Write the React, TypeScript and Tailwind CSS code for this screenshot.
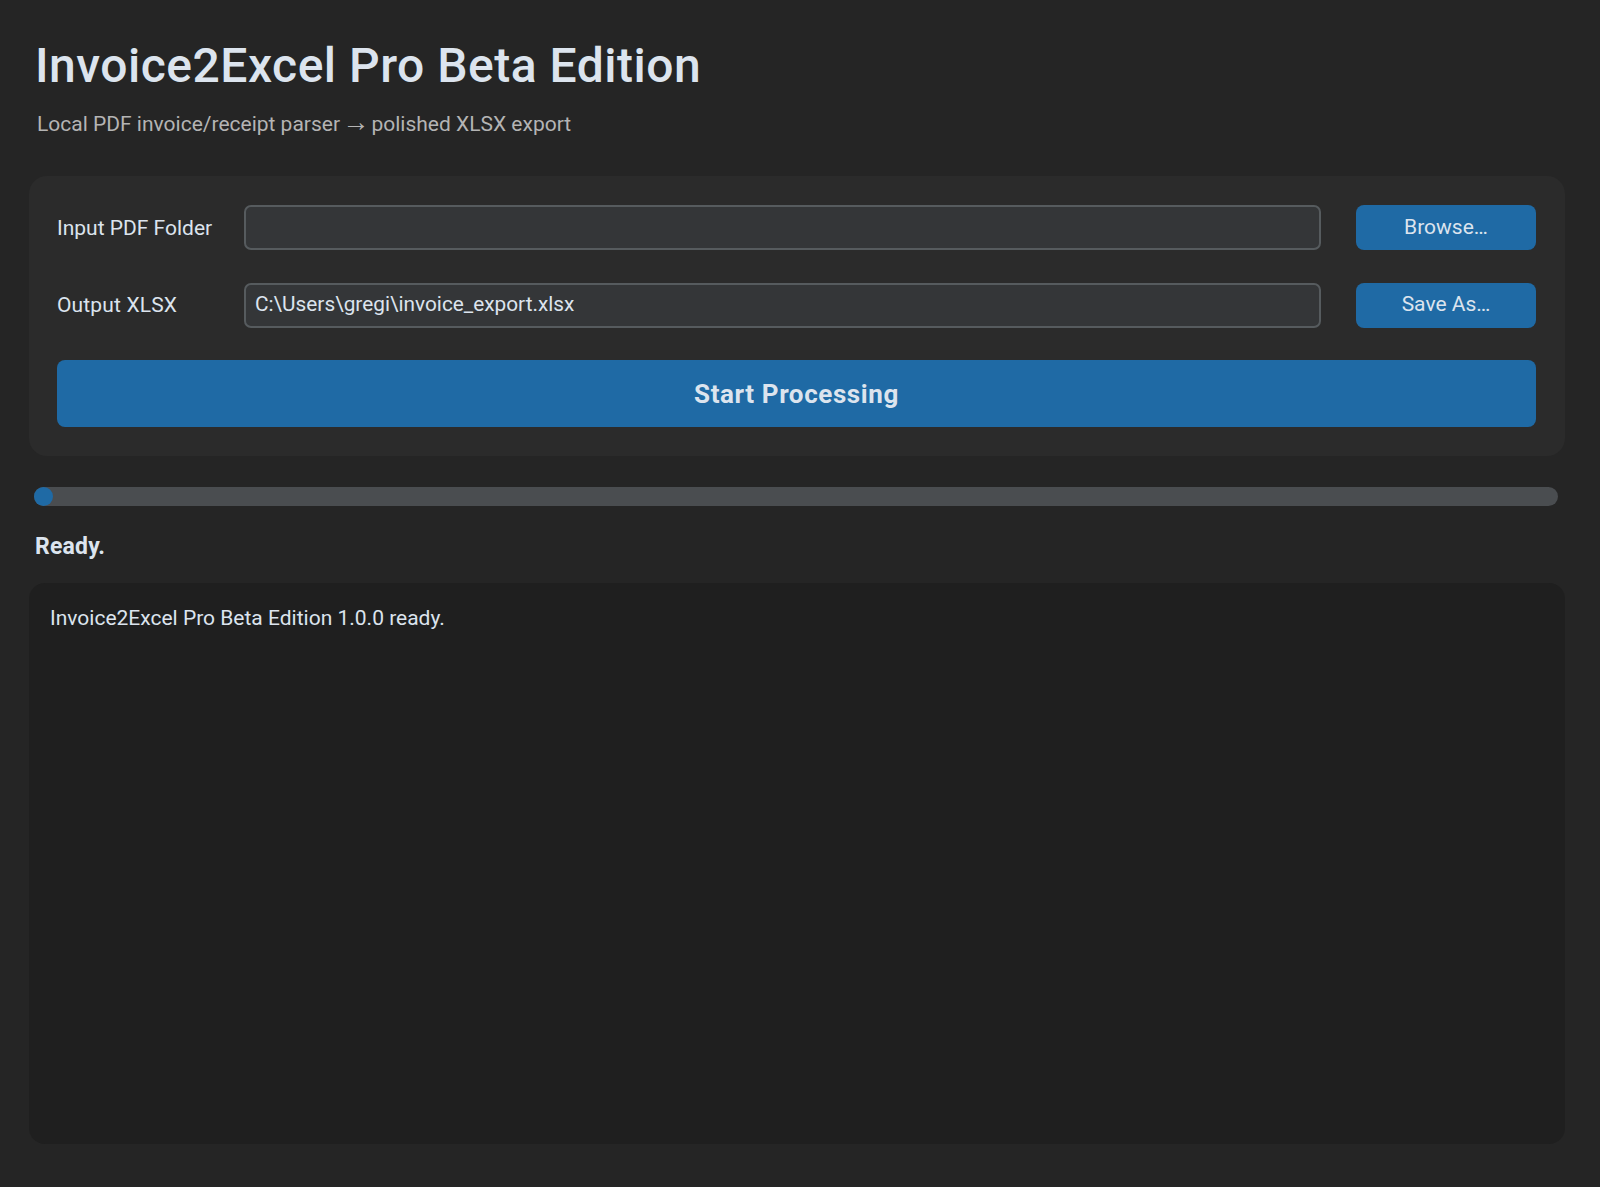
import React from 'react';

const App: React.FC = () => {
  return (
    <div className="min-h-screen bg-[#252525] pl-[29px] pr-[35px] pt-[35px] font-['Roboto',sans-serif] text-[#DCE4EE]">
      {/* Header */}
      <h1 className="pl-[6px] text-[48px] leading-[62px] font-medium tracking-[0.5px]">Invoice2Excel Pro Beta Edition</h1>
      <p className="mt-[12px] pl-[8px] text-[21px] leading-[30px] text-[#b4b4b4]">
        Local PDF invoice/receipt parser <span className="-mx-[3px] font-['Liberation_Sans',sans-serif] text-[27px] leading-none">→</span> polished XLSX export
      </p>

      {/* Form card */}
      <div className="mt-[37px] flex flex-col rounded-[18px] bg-[#2B2B2B] p-[29px] pl-[28px]">
        <div className="flex items-center">
          <label className="w-[187px] pt-[2px] text-[21px]">Input PDF Folder</label>
          <input readOnly value="" className="h-[45px] flex-1 rounded-[7px] border-2 border-[#565B5E] bg-[#343638] px-[9px] text-[21px] outline-none" />
          <button className="ml-[35px] h-[45px] w-[180px] rounded-[8px] bg-[#1F6AA5] text-[21px]">Browse…</button>
        </div>
        <div className="mt-[32.5px] flex items-center">
          <label className="w-[187px] pt-[2px] text-[21px] tracking-[0.15px]">Output XLSX</label>
          <input readOnly value="C:\Users\gregi\invoice_export.xlsx" className="h-[45px] flex-1 rounded-[7px] border-2 border-[#565B5E] bg-[#343638] px-[9px] pb-[2px] text-[20.8px] outline-none" />
          <button className="ml-[35px] h-[45px] w-[180px] rounded-[8px] bg-[#1F6AA5] text-[21px]">Save As…</button>
        </div>
        <button className="mt-[32.5px] h-[67px] rounded-[8px] bg-[#1F6AA5] pt-[1px] text-[26px] font-bold tracking-[0.6px]">Start Processing</button>
      </div>

      {/* Progress */}
      <div className="mt-[31px] ml-[5px] mr-[7px] h-[19px] rounded-full bg-[#4A4D50]">
        <div className="h-[19px] w-[19px] rounded-full bg-[#1F6AA5]" />
      </div>

      <div className="mt-[26px] pl-[6px] text-[23px] leading-[30px] font-bold tracking-[0.2px]">Ready.</div>

      {/* Log */}
      <div className="mt-[21px] h-[561px] rounded-[16px] bg-[#1F1F1F] px-[21px] py-[20px] text-[21px] leading-[30px]">
        Invoice2Excel Pro Beta Edition 1.0.0 ready.
      </div>
    </div>
  );
};

export default App;
